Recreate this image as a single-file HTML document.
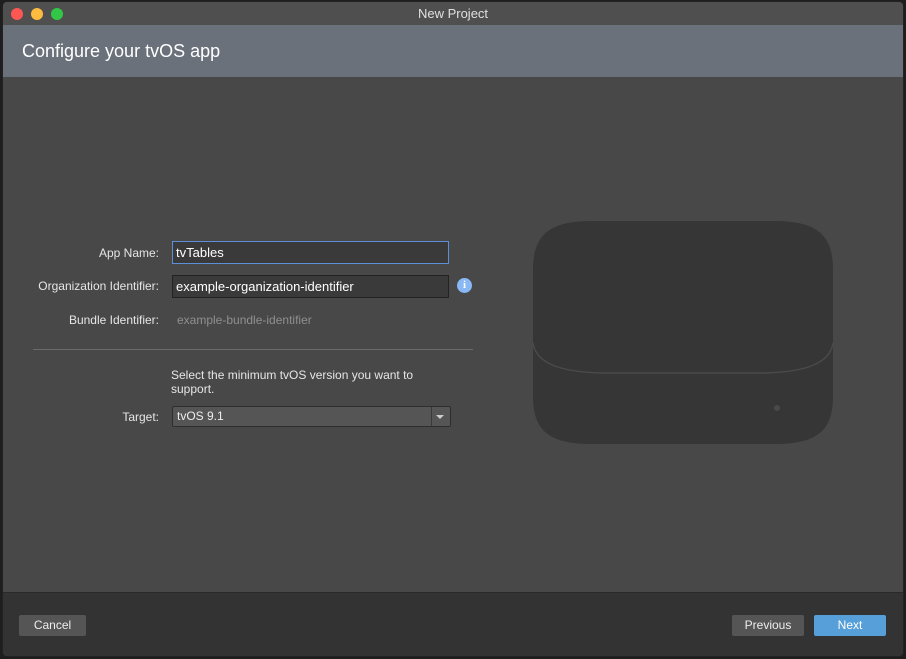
<!DOCTYPE html>
<html><head><meta charset="utf-8"><style>
*{margin:0;padding:0;box-sizing:border-box}
body{width:906px;height:659px;background:#1e1e1e;font-family:"Liberation Sans",sans-serif;position:relative;overflow:hidden}
.win{position:absolute;left:2px;top:1px;width:902px;height:656px;background:#484848;border-radius:5px;overflow:hidden;border:1px solid #222}
.tb{position:absolute;left:0;top:0;right:0;height:23px;background:#4f4f4f;color:#e0e0e0;font-size:13px;text-align:center;line-height:24px}
.dot{position:absolute;top:6px;width:12px;height:12px;border-radius:50%}
.hd{position:absolute;left:0;right:0;top:23px;height:52px;background:#6a717b;color:#fff;font-size:18px;padding-left:19px;line-height:52px}
.lbl{position:absolute;right:744px;color:#e6e6e6;font-size:12px;text-align:right;white-space:nowrap}
.fld{position:absolute;left:169px;width:277px;height:23px;background:#3a3a3a;border:1px solid #222;color:#fff;font-size:13px;padding-left:3px;line-height:21px}
.ft{position:absolute;left:0;right:0;top:590px;bottom:0;background:#333;border-top:1px solid #2a2a2a}
.btn{position:absolute;top:22px;height:21px;background:#555;color:#eee;font-size:12px;text-align:center;line-height:21px;border-radius:2px}
</style></head><body>
<div class="win">
<div class="tb">New Project
<div class="dot" style="left:8px;background:#fc5753"></div>
<div class="dot" style="left:28px;background:#fdbc40"></div>
<div class="dot" style="left:48px;background:#33c748"></div>
</div>
<div class="hd">Configure your tvOS app</div>
<div class="lbl" style="top:244px">App Name:</div>
<div class="fld" style="top:239px;border:1px solid #5d8fd8;height:23px">tvTables</div>
<div class="lbl" style="top:277px">Organization Identifier:</div>
<div class="fld" style="top:273px">example-organization-identifier</div>
<div style="position:absolute;left:454px;top:276px;width:15px;height:15px;border-radius:50%;background:#8ab8f4;color:#fff;font-weight:bold;font-size:11px;text-align:center;line-height:15px;font-family:'Liberation Serif',serif">i</div>
<div class="lbl" style="top:311px">Bundle Identifier:</div>
<div style="position:absolute;left:174px;top:311px;color:#8f8f8f;font-size:12px">example-bundle-identifier</div>
<div style="position:absolute;left:30px;width:440px;top:347px;height:1px;background:#6a6a6a"></div>
<div style="position:absolute;left:168px;top:366px;width:260px;color:#e6e6e6;font-size:12px;line-height:14px">Select the minimum tvOS version you want to support.</div>
<div class="lbl" style="top:408px">Target:</div>
<div style="position:absolute;left:169px;top:404px;width:279px;height:21px;background:#555;border:1px solid #2e2e2e;border-radius:2px;color:#eee;font-size:12px;line-height:19px;padding-left:4px">tvOS 9.1
<div style="position:absolute;right:0;top:0;width:19px;height:19px;border-left:1px solid #3a3a3a"></div>
<div style="position:absolute;right:6px;top:8px;width:0;height:0;border-left:4px solid transparent;border-right:4px solid transparent;border-top:4px solid #ccc"></div>
</div>
<svg style="position:absolute;left:529px;top:218px" width="302" height="226" viewBox="0 0 302 226">
<path d="M60 1 H242 C285 1 301 15 301 50 V176 C301 211 285 224 242 224 H60 C17 224 1 211 1 176 V50 C1 15 17 1 60 1 Z" fill="#363636"/>
<path d="M1 123 C4 142 25 152 70 153 H232 C277 152 298 142 301 123" fill="none" stroke="#4a4a4a" stroke-width="1.5"/>
<circle cx="245" cy="188" r="3" fill="#4a4a4a"/>
</svg>
<div class="ft">
<div class="btn" style="left:16px;width:67px">Cancel</div>
<div class="btn" style="left:729px;width:72px">Previous</div>
<div class="btn" style="left:811px;width:72px;background:#579fd8;color:#fff">Next</div>
</div>
</div>
</body></html>
